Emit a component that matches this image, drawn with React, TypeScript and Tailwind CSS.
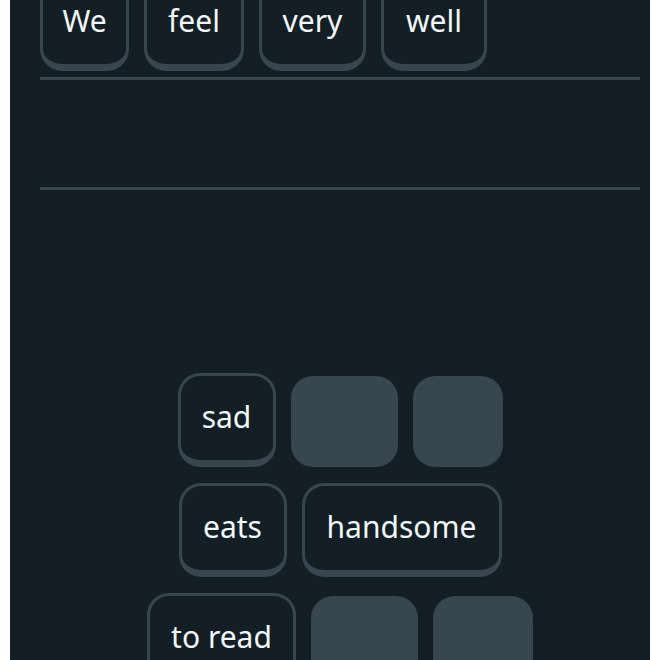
import React from "react";

const font = { fontFamily: '"Noto Sans", "Open Sans", sans-serif' };

function Word({ text, w }: { text: string; w: string }) {
  return (
    <div
      className={`${w} h-[94px] shrink-0 rounded-[22px] border-[3px] border-b-[7px] border-[#37464f] bg-[#131f24] flex items-center justify-center pb-[3px]`}
    >
      <span className="text-[30px] leading-none font-normal text-[#f1f7fb]">{text}</span>
    </div>
  );
}

function Empty({ w }: { w: string }) {
  return <div className={`${w} h-[91px] shrink-0 rounded-[22px] bg-[#37464f]`} />;
}

export default function App() {
  return (
    <div className="min-h-[660px] bg-white px-[10px]" style={font}>
      <div className="h-[660px] overflow-hidden bg-[#131f24] pl-[30px] pr-[10px]">
        <div className="-mt-[23px] flex gap-[15px]">
          <Word text="We" w="w-[89px]" />
          <Word text="feel" w="w-[100px]" />
          <Word text="very" w="w-[107px]" />
          <Word text="well" w="w-[106px]" />
        </div>
        <div className="mt-[6px] h-[3px] bg-[#37464f]" />
        <div className="mt-[107px] h-[3px] bg-[#37464f]" />
        <div className="mt-[183px] flex flex-col gap-[16px]">
          <div className="flex items-end justify-center gap-[15px]">
            <Word text="sad" w="w-[98px]" />
            <Empty w="w-[107px]" />
            <Empty w="w-[90px]" />
          </div>
          <div className="flex items-end justify-center gap-[15px]">
            <Word text="eats" w="w-[108px]" />
            <Word text="handsome" w="w-[200px]" />
          </div>
          <div className="flex items-end justify-center gap-[15px]">
            <Word text="to read" w="w-[149px]" />
            <Empty w="w-[107px]" />
            <Empty w="w-[100px]" />
          </div>
        </div>
      </div>
    </div>
  );
}
